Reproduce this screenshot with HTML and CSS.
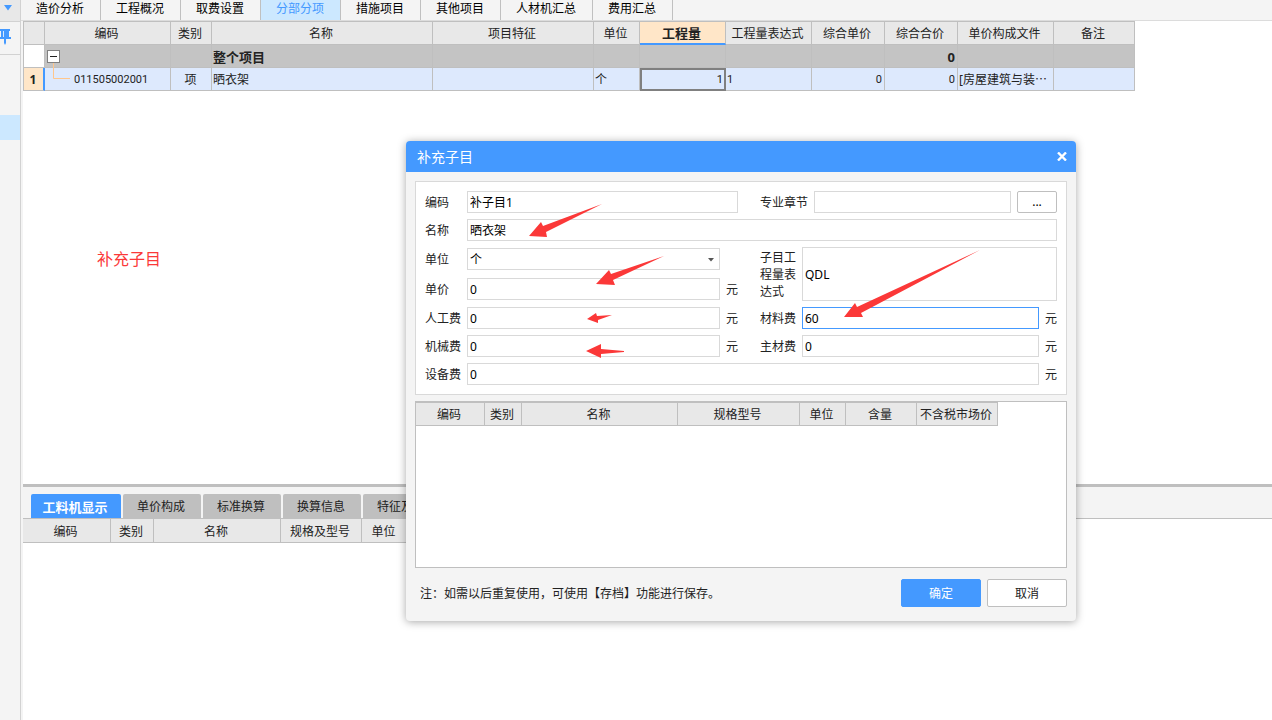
FILE: index.html
```html
<!DOCTYPE html>
<html lang="zh-CN">
<head>
<meta charset="utf-8">
<title>分部分项</title>
<link rel="stylesheet" href="styles.css">
</head>
<body>
<div class="app">
  <aside class="rail">
    <button class="rail-toggle" aria-label="展开"><svg width="8" height="6" viewBox="0 0 8 6"><path d="M0 0h8L4 5.500z" fill="#4499ff"/></svg></button>
    <button class="rail-pin" aria-label="固定"><svg width="12" height="17" viewBox="0 0 12 17"><path d="M0 0h10v2H9v6h2v2H6v4l-1 2-1-2v-4H0V8h1V2H0z" fill="#4499ff"/><path d="M3.500 2v6" stroke="#d4e8ff"/></svg></button>
    <div class="rail-current"></div>
  </aside>
  <main class="main">
    <nav class="tabs">
      <button class="tab">造价分析</button><button class="tab">工程概况</button><button class="tab">取费设置</button><button class="tab tab-active">分部分项</button><button class="tab">措施项目</button><button class="tab">其他项目</button><button class="tab">人材机汇总</button><button class="tab">费用汇总</button>
    </nav>
    <section class="items">
      <table class="grid">
        <colgroup><col class="c-no"><col class="c-code"><col class="c-kind"><col class="c-name"><col class="c-feature"><col class="c-unit"><col class="c-qty"><col class="c-qty"><col class="c-price"><col class="c-price"><col class="c-file"><col class="c-note"></colgroup>
        <thead>
          <tr><th></th><th>编码</th><th>类别</th><th>名称</th><th>项目特征</th><th>单位</th><th class="head-current">工程量</th><th>工程量表达式</th><th>综合单价</th><th>综合合价</th><th>单价构成文件</th><th>备注</th></tr>
        </thead>
        <tbody>
          <tr class="row-total"><td class="row-no"></td><td class="tree-cell"><button class="collapse" aria-label="折叠"></button></td><td></td><td>整个项目</td><td></td><td></td><td></td><td></td><td></td><td class="num">0</td><td></td><td></td></tr>
          <tr class="row-selected"><td class="row-no row-no-current">1</td><td class="tree-cell"><div class="branch"><svg width="29" height="22" viewBox="0 0 29 22"><path d="M8.500-5v15.500H25" fill="none" stroke="#ffc68c"/></svg><span class="code">011505002001</span></div></td><td class="mid">项</td><td>晒衣架</td><td></td><td>个</td><td class="num cell-current">1</td><td class="code">1</td><td class="num">0</td><td class="num">0</td><td>[房屋建筑与装⋯</td><td></td></tr>
        </tbody>
      </table>
      <p class="caption">补充子目</p>
    </section>
    <section class="detail">
      <nav class="detail-tabs">
        <button class="detail-tab detail-tab-active">工料机显示</button><button class="detail-tab">单价构成</button><button class="detail-tab">标准换算</button><button class="detail-tab">换算信息</button><button class="detail-tab">特征及内容</button>
      </nav>
      <div class="detail-body">
        <table class="grid grid-detail">
          <colgroup><col class="d-code"><col class="d-kind"><col class="d-name"><col class="d-spec"><col class="d-unit"></colgroup>
          <thead><tr><th>编码</th><th>类别</th><th>名称</th><th>规格及型号</th><th>单位</th></tr></thead>
        </table>
      </div>
    </section>
  </main>
</div>

<div class="dialog" role="dialog" aria-labelledby="dialog-title">
  <header class="dialog-head">
    <h2 id="dialog-title" class="dialog-title">补充子目</h2>
    <button class="dialog-close" aria-label="关闭"><svg width="10" height="9" viewBox="0 0 10 9"><path d="M1 .500l8 8M9 .500l-8 8" stroke="#fff" stroke-width="2.400"/></svg></button>
  </header>
  <form class="dialog-body">
    <div class="fields">
      <label for="f-code">编码</label>
      <div class="code-line">
        <input id="f-code" class="box code-box" type="text" value="补子目1">
        <label for="f-chapter" class="chapter-label">专业章节</label>
        <input id="f-chapter" class="box chapter-box" type="text">
        <button type="button" class="more">...</button>
      </div>
      <label for="f-name">名称</label>
      <input id="f-name" class="box span-all" type="text" value="晒衣架">
      <label for="f-unit">单位</label>
      <div class="select">
        <select id="f-unit" class="box"><option>个</option></select>
        <svg class="select-arrow" width="6" height="4" viewBox="0 0 6 4"><path d="M0 0h6L3 3.500z" fill="#555"/></svg>
      </div>
      <span></span>
      <label for="f-expr" class="tall">子目工程量表达式</label>
      <input id="f-expr" class="box tall expr" type="text" value="QDL">
      <label for="f-price">单价</label>
      <input id="f-price" class="box" type="text" value="0">
      <span class="yuan">元</span>
      <label for="f-labor">人工费</label>
      <input id="f-labor" class="box" type="text" value="0">
      <span class="yuan">元</span>
      <label for="f-material">材料费</label>
      <input id="f-material" class="box box-focus" type="text" value="60">
      <span class="yuan">元</span>
      <label for="f-machine">机械费</label>
      <input id="f-machine" class="box" type="text" value="0">
      <span class="yuan">元</span>
      <label for="f-main">主材费</label>
      <input id="f-main" class="box" type="text" value="0">
      <span class="yuan">元</span>
      <label for="f-device">设备费</label>
      <input id="f-device" class="box span-wide" type="text" value="0">
      <span class="yuan">元</span>
    </div>
    <div class="parts">
      <table class="grid grid-parts">
        <colgroup><col class="p-code"><col class="p-kind"><col class="p-name"><col class="p-spec"><col class="p-unit"><col class="p-amount"><col class="p-market"></colgroup>
        <thead><tr><th>编码</th><th>类别</th><th>名称</th><th>规格型号</th><th>单位</th><th>含量</th><th>不含税市场价</th></tr></thead>
      </table>
    </div>
    <footer class="dialog-foot">
      <p class="hint">注：如需以后重复使用，可使用【存档】功能进行保存。</p>
      <button type="button" class="btn btn-primary">确定</button>
      <button type="button" class="btn">取消</button>
    </footer>
  </form>
  <svg class="arrows" viewBox="406 141 670 480" aria-hidden="true">
    <g fill="#fb3838">
      <path d="M529 236L541 222L543 226L602 204L546 232L547 237z"/>
      <path d="M596 284L609 270L611 274L664 256L613 280L615 285z"/>
      <path d="M587 319L596 313L597 316L612 315L598 320L598 323z"/>
      <path d="M586 351L601 344V349L624 351V352L601 354V358z"/>
      <path d="M844 317L855 303L857 307L980 250L861 313L863 317z"/>
    </g>
  </svg>
</div>
</body>
</html>
```

FILE: styles.css
```css
* { box-sizing: border-box; }

body {
  margin: 0;
  background: #fff;
  color: #222;
  font: 12px/16px "Noto Sans", "Noto Sans CJK SC", sans-serif;
}

button, input, select {
  margin: 0;
  padding: 0;
  border: 0;
  border-radius: 0;
  background: none;
  color: inherit;
  font: inherit;
}

p, h2 { margin: 0; }

.app { display: flex; min-height: 100vh; }

/* left rail */
.rail {
  display: flex;
  flex: none;
  flex-direction: column;
  width: 21px;
  border-right: 1px solid #d2d2d2;
  background: #f4f4f4;
}
.rail-toggle {
  display: flex;
  justify-content: center;
  align-items: flex-start;
  height: 22px;
  padding: 5px 4px 0 0;
  border-bottom: 1px solid #d2d2d2;
  background: #e8e8e8;
}
.rail-pin {
  display: flex;
  height: 33px;
  padding-top: 7px;
  border-bottom: 1px solid #d2d2d2;
}
.rail-current { height: 25px; margin-top: 60px; background: #cce8ff; }

/* top tabs */
.main {
  display: flex;
  flex: 1;
  flex-direction: column;
  min-width: 0;
  background: #f4f4f4;
}
.tabs { display: flex; height: 21px; border-bottom: 1px solid #dcdcdc; }
.tab {
  padding: 0 16px 2px 15px;
  border-right: 1px solid #c0c0c0;
  color: #000;
  white-space: nowrap;
}
.tab-active { background: #cce8ff; color: #4499ff; }

.items { flex: 1; margin-left: 2px; background: #fff; }

/* grids */
.grid {
  width: 0;
  table-layout: fixed;
  border-spacing: 0;
  border: solid #bfbfbf;
  border-width: 1px 0 0 1px;
}
.grid th, .grid td {
  height: 23px;
  padding: 2px 2px 0 1px;
  border: solid #bfbfbf;
  border-width: 0 1px 1px 0;
  text-align: left;
  white-space: nowrap;
}
.grid th {
  padding: 2px 2px 0 0;
  background: #e8e8e8;
  font-weight: 400;
  text-align: center;
}
.grid .head-current {
  padding-top: 0;
  border-bottom: 2px solid #4499ff;
  background: #ffe6c8;
  font-size: 13px;
  font-weight: 700;
}
.grid .num { text-align: right; }
.grid .mid { text-align: center; }
.row-total { background: #c4c4c4; font-size: 13px; font-weight: 700; }
.row-selected { background: #dde9fd; }
.grid .row-no { background: #fff; text-align: center; }
.grid .row-no-current {
  border-right: 2px solid #4499ff;
  background: #ffe6c8;
  font-weight: 700;
}
.grid .tree-cell { padding: 0; }
.grid .cell-current { outline: 2px solid #808080; outline-offset: -2px; }
.collapse {
  display: flex;
  align-items: center;
  justify-content: center;
  width: 13px;
  height: 13px;
  margin-left: 2px;
  border: 1px solid #808080;
  background: #fff;
}
.collapse::before { content: ""; width: 7px; height: 1px; background: #222; }
.branch { display: flex; align-items: center; }
.branch svg { overflow: visible; }
.branch .code { padding-top: 2px; }
.code, .row-selected .num { font-family: Roboto, sans-serif; font-size: 11px; }

.c-no { width: 21px; }
.c-code { width: 126px; }
.c-kind { width: 41px; }
.c-name { width: 221px; }
.c-feature { width: 161px; }
.c-unit { width: 46px; }
.c-qty { width: 86px; }
.c-price { width: 73px; }
.c-file { width: 96px; }
.c-note { width: 81px; }

.caption {
  margin: 157px 0 0 74px;
  color: #fb3838;
  font-size: 16px;
  line-height: 22px;
}

/* lower panel */
.detail {
  display: flex;
  flex-direction: column;
  min-height: 236px;
  margin-left: 2px;
  border-top: 3px solid #bfbfbf;
}
.detail-tabs {
  display: flex;
  gap: 2px;
  height: 32px;
  padding: 7px 0 0 8px;
  border-bottom: 1px solid #bfbfbf;
}
.detail-tab {
  padding: 2px 16px 0 14px;
  border-radius: 2px 2px 0 0;
  background: #bfbfbf;
  white-space: nowrap;
}
.detail-tab-active {
  min-width: 90px;
  padding: 2px 13px 0 11px;
  background: #4499ff;
  color: #fff;
  font-size: 13px;
  font-weight: 700;
}
.detail-body { flex: 1; background: #fff; }
.grid-detail { border-width: 0; }
.grid-detail th { height: 24px; }
.d-code { width: 88px; }
.d-kind { width: 43px; }
.d-name { width: 127px; }
.d-spec { width: 81px; }
.d-unit { width: 46px; }

/* dialog */
.dialog {
  position: absolute;
  top: 141px;
  left: 406px;
  width: 670px;
  border-radius: 4px;
  background: #f4f4f4;
  box-shadow: 0 1px 8px rgba(0, 0, 0, 0.35);
}
.dialog-head {
  display: flex;
  align-items: center;
  justify-content: space-between;
  height: 31px;
  padding: 0 9px 0 11px;
  border-radius: 4px 4px 0 0;
  background: #4499ff;
  color: #fff;
}
.dialog-title { font-size: 14px; font-weight: 400; line-height: 20px; }
.dialog-close { display: flex; }
.dialog-body { padding: 9px 9px 14px; }

.fields {
  display: grid;
  grid-template-columns: 42px 253fr 40px 42px 237fr 18px;
  grid-template-rows: 22px 22px 24px 24px 22px 22px 22px;
  row-gap: 6px;
  align-items: center;
  padding: 9px;
  border: 1px solid #d9d9d9;
  background: #fff;
}
.fields label, .yuan { padding-top: 2px; }
.box {
  width: 100%;
  min-width: 0;
  height: 22px;
  padding: 0 2px;
  border: 1px solid #d9d9d9;
  background: #fff;
  color: #000;
}
.box:focus { outline: none; }
.box:focus, .box-focus { border-color: #4499ff; }
.code-line { display: flex; grid-column: 2 / -1; align-items: center; }
.code-box { flex: 272 1 0; }
.chapter-label { padding: 0 6px 0 22px; white-space: nowrap; }
.chapter-box { flex: 196 1 0; }
.more {
  width: 40px;
  height: 22px;
  margin-left: 6px;
  border: 1px solid #bfbfbf;
  border-radius: 2px;
  background: #fff;
  color: #000;
}
.span-all { grid-column: 2 / -1; }
.span-wide { grid-column: 2 / 6; }
.select { position: relative; }
.select .box { display: block; padding-top: 2px; appearance: none; }
.select-arrow { position: absolute; top: 10px; right: 6px; pointer-events: none; }
.tall { grid-row: 3 / 5; line-height: 17px; }
.fields label.tall { padding: 0 6px 0 0; grid-column: 4; }
.expr { grid-column: 5 / 7; height: 54px; }
.yuan { padding-left: 6px; }

.parts {
  height: 167px;
  margin-top: 6px;
  border: 1px solid #bfbfbf;
  background: #fff;
}
.grid-parts { border-left-width: 0; }
.p-code { width: 69px; }
.p-kind { width: 37px; }
.p-name { width: 156px; }
.p-spec { width: 122px; }
.p-unit { width: 46px; }
.p-amount { width: 71px; }
.p-market { width: 81px; }

.dialog-foot {
  display: flex;
  align-items: center;
  gap: 6px;
  margin-top: 11px;
}
.hint { flex: 1; padding: 2px 0 0 5px; }
.btn {
  width: 80px;
  height: 28px;
  padding-top: 2px;
  border: 1px solid #bfbfbf;
  border-radius: 2px;
  background: #fff;
}
.btn-primary { border-color: #4499ff; background: #4499ff; color: #fff; }

.arrows {
  position: absolute;
  inset: 0;
  width: 100%;
  height: 100%;
  pointer-events: none;
}
```
